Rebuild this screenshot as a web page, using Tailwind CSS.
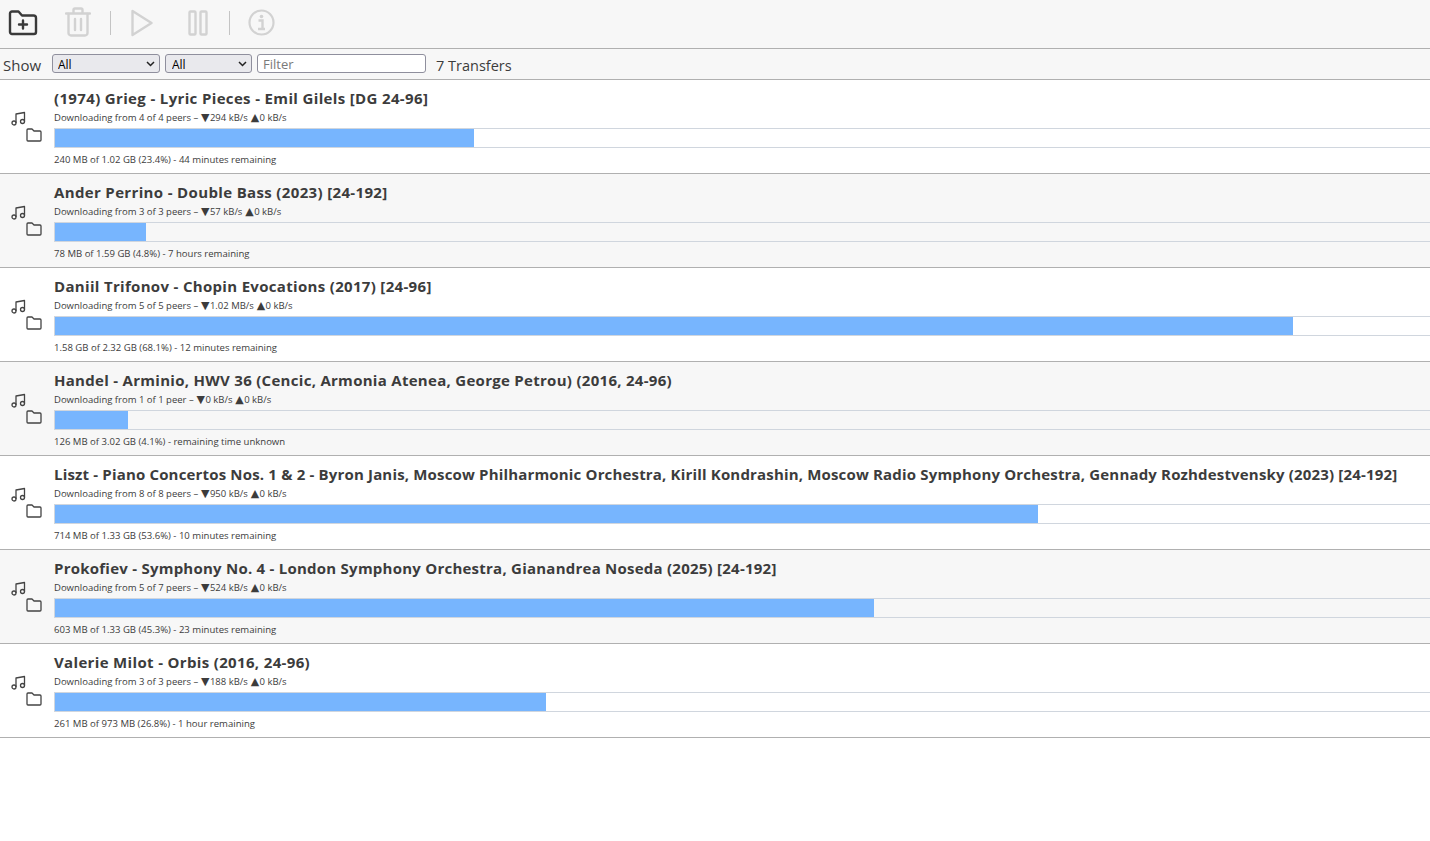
<!DOCTYPE html>
<html lang="en">
<head>
  <meta charset="UTF-8">
  <title>Transfers</title>
  <script src="https://cdn.jsdelivr.net/npm/@tailwindcss/browser@4"></script>
</head>
<body class="bg-white font-['Open_Sans','Noto_Sans',sans-serif] text-[#3c3c3c] overflow-hidden">
  <!-- toolbar -->
  <div class="h-[49px] bg-[#f7f7f7] border-b border-[#b0b0b0] flex items-center">
    <svg class="ml-[8px] w-[30px] h-[30px] mb-[4px] text-[#3a3a3a]" viewBox="0 0 30 30" fill="none" stroke="currentColor" stroke-width="2.4" stroke-linejoin="round" stroke-linecap="round">
      <path d="M2 6.500a2 2 0 0 1 2-2h6.500l3.500 4h11.500a2.500 2.500 0 0 1 2.500 2.500v14a2 2 0 0 1-2 2h-22a2 2 0 0 1-2-2z"/>
      <path d="M15 13.500v8M11 17.500h8"/>
    </svg>
    <svg class="ml-[27px] w-[26px] h-[30px] mb-[4px] text-[#d2d2d2]" viewBox="0 0 26 30" fill="none" stroke="currentColor" stroke-width="2.400" stroke-linecap="round" stroke-linejoin="round">
      <path d="M1 6.500h24M8.500 6V3a1.500 1.500 0 0 1 1.500-1.500h6A1.500 1.500 0 0 1 17.500 3v3"/>
      <path d="M3.500 7v19a2.500 2.500 0 0 0 2.500 2.500h14a2.500 2.500 0 0 0 2.500-2.500V7"/>
      <path d="M10 12v11M16 12v11"/>
    </svg>
    <div class="ml-[19px] w-px h-[24px] bg-[#c4c4c4] mb-[3px]"></div>
    <svg class="ml-[20px] w-[22px] h-[28px] mb-[3px] text-[#d2d2d2]" viewBox="0 0 22 28" fill="none" stroke="currentColor" stroke-width="2.400" stroke-linejoin="round">
      <path d="M1.500 2v24l19-12z"/>
    </svg>
    <svg class="ml-[35px] w-[20px] h-[26px] mb-[3px] text-[#d2d2d2]" viewBox="0 0 20 26" fill="none" stroke="currentColor" stroke-width="2.400" stroke-linejoin="round">
      <rect x="1.500" y="1.500" width="6" height="23" rx="1"/>
      <rect x="12.500" y="1.500" width="6" height="23" rx="1"/>
    </svg>
    <div class="ml-[21px] w-px h-[24px] bg-[#c4c4c4] mb-[3px]"></div>
    <svg class="ml-[18px] w-[27px] h-[27px] mb-[3px] text-[#d2d2d2]" viewBox="0 0 27 27" fill="none" stroke="currentColor" stroke-width="2.200">
      <circle cx="13.500" cy="13.500" r="12"/>
      <circle cx="13.500" cy="7.500" r="1.800" fill="currentColor" stroke="none"/>
      <path d="M10.500 11.500h4v8M10 20h7" stroke-width="2.400"/>
    </svg>
  </div>

  <!-- filter bar -->
  <div class="h-[31px] bg-[#f7f7f7] border-b border-[#b0b0b0] flex items-center text-[15px]">
    <span class="ml-[3px] w-[49px] pt-[2px]">Show</span>
    <div class="relative w-[108px] h-[19px] mb-[1px]">
      <select class="block appearance-none w-full h-full bg-[#e9e9ed] border border-[#8f8f9d] rounded-[3px] pl-[5px] pt-[2px] text-[12px] leading-[14px] text-black"><option>All</option></select>
      <svg class="absolute right-[5px] top-[7px] w-[9px] h-[6px]" viewBox="0 0 9 6" fill="none" stroke="#222" stroke-width="1.500"><path d="M1 1l3.500 3.500L8 1"/></svg>
    </div>
    <div class="relative ml-[5px] w-[87px] h-[19px] mb-[1px]">
      <select class="block appearance-none w-full h-full bg-[#e9e9ed] border border-[#8f8f9d] rounded-[3px] pl-[6px] pt-[2px] text-[12px] leading-[14px] text-black"><option>All</option></select>
      <svg class="absolute right-[5px] top-[7px] w-[9px] h-[6px]" viewBox="0 0 9 6" fill="none" stroke="#222" stroke-width="1.500"><path d="M1 1l3.500 3.500L8 1"/></svg>
    </div>
    <input class="ml-[5px] w-[169px] h-[19px] bg-white border border-[#8f8f9d] rounded-[3px] px-[5px] pt-[2px] text-[13px] placeholder:text-[#7a7a7a] mb-[1px]" placeholder="Filter">
    <span class="ml-[10px] pt-[3px] text-[14.500px]">7 Transfers</span>
  </div>

  <div id="list"></div>

  <script>
    // title, peers, speed, progress, bar px, letter spacing px
    const transfers = [
      ["(1974) Grieg - Lyric Pieces - Emil Gilels [DG 24-96]", "4 of 4 peers", "294 kB/s", "240 MB of 1.02 GB (23.4%) - 44 minutes remaining", 419, 0.35],
      ["Ander Perrino - Double Bass (2023) [24-192]", "3 of 3 peers", "57 kB/s", "78 MB of 1.59 GB (4.8%) - 7 hours remaining", 91, 0.35],
      ["Daniil Trifonov - Chopin Evocations (2017) [24-96]", "5 of 5 peers", "1.02 MB/s", "1.58 GB of 2.32 GB (68.1%) - 12 minutes remaining", 1238, 0.32],
      ["Handel - Arminio, HWV 36 (Cencic, Armonia Atenea, George Petrou) (2016, 24-96)", "1 of 1 peer", "0 kB/s", "126 MB of 3.02 GB (4.1%) - remaining time unknown", 73, 0.29],
      ["Liszt - Piano Concertos Nos. 1 &amp; 2 - Byron Janis, Moscow Philharmonic Orchestra, Kirill Kondrashin, Moscow Radio Symphony Orchestra, Gennady Rozhdestvensky (2023) [24-192]", "8 of 8 peers", "950 kB/s", "714 MB of 1.33 GB (53.6%) - 10 minutes remaining", 983, 0.17],
      ["Prokofiev - Symphony No. 4 - London Symphony Orchestra, Gianandrea Noseda (2025) [24-192]", "5 of 7 peers", "524 kB/s", "603 MB of 1.33 GB (45.3%) - 23 minutes remaining", 819, 0.24],
      ["Valerie Milot - Orbis (2016, 24-96)", "3 of 3 peers", "188 kB/s", "261 MB of 973 MB (26.8%) - 1 hour remaining", 491, 0.34],
    ];

    const list = document.getElementById("list");
    transfers.forEach((t, i) => {
      const row = document.createElement("div");
      row.className = "h-[94px] border-b border-[#b0b0b0] flex " + (i % 2 ? "bg-[#f7f7f7]" : "bg-white");
      row.innerHTML = `
        <div class="w-[54px] shrink-0 pt-[31px] pl-[11px]">
          <svg class="w-[15px] h-[15px]" viewBox="0 0 15 15" fill="none" stroke="#444" stroke-width="1.300" stroke-linejoin="round">
            <circle cx="3" cy="12" r="2"/><circle cx="11.500" cy="10.500" r="2"/>
            <path d="M5 12V3l8.500-1.500v9"/>
          </svg>
          <svg class="ml-[15px] mt-[2px] w-[16px] h-[14px]" viewBox="0 0 16 14" fill="none" stroke="#444" stroke-width="1.300" stroke-linejoin="round">
            <path d="M1 2a1 1 0 0 1 1-1h4l2 2h6a1 1 0 0 1 1 1v8a1 1 0 0 1-1 1H2a1 1 0 0 1-1-1z"/>
          </svg>
        </div>
        <div class="flex-1 min-w-0">
          <div class="h-[25px] pt-[6px] text-[15px] leading-[24px] font-bold whitespace-nowrap" style="letter-spacing:${t[5]}px">${t[0]}</div>
          <div class="h-[23px] pt-[5px] text-[9.500px] leading-[16px] whitespace-nowrap">Downloading from ${t[1]} – <span class="font-['DejaVu_Sans'] text-[11px] mx-[0.4px]">▼</span>${t[2]} <span class="font-['DejaVu_Sans'] text-[11px] mx-[0.4px]">▲</span>0 kB/s</div>
          <div class="h-[20px] border-y border-l border-[#d0d6de]"><div class="h-full bg-[#77b5fe]" style="width:${t[4]}px"></div></div>
          <div class="pt-[4px] text-[9.550px] leading-[16px] whitespace-nowrap">${t[3]}</div>
        </div>`;
      list.appendChild(row);
    });
  </script>
</body>
</html>
